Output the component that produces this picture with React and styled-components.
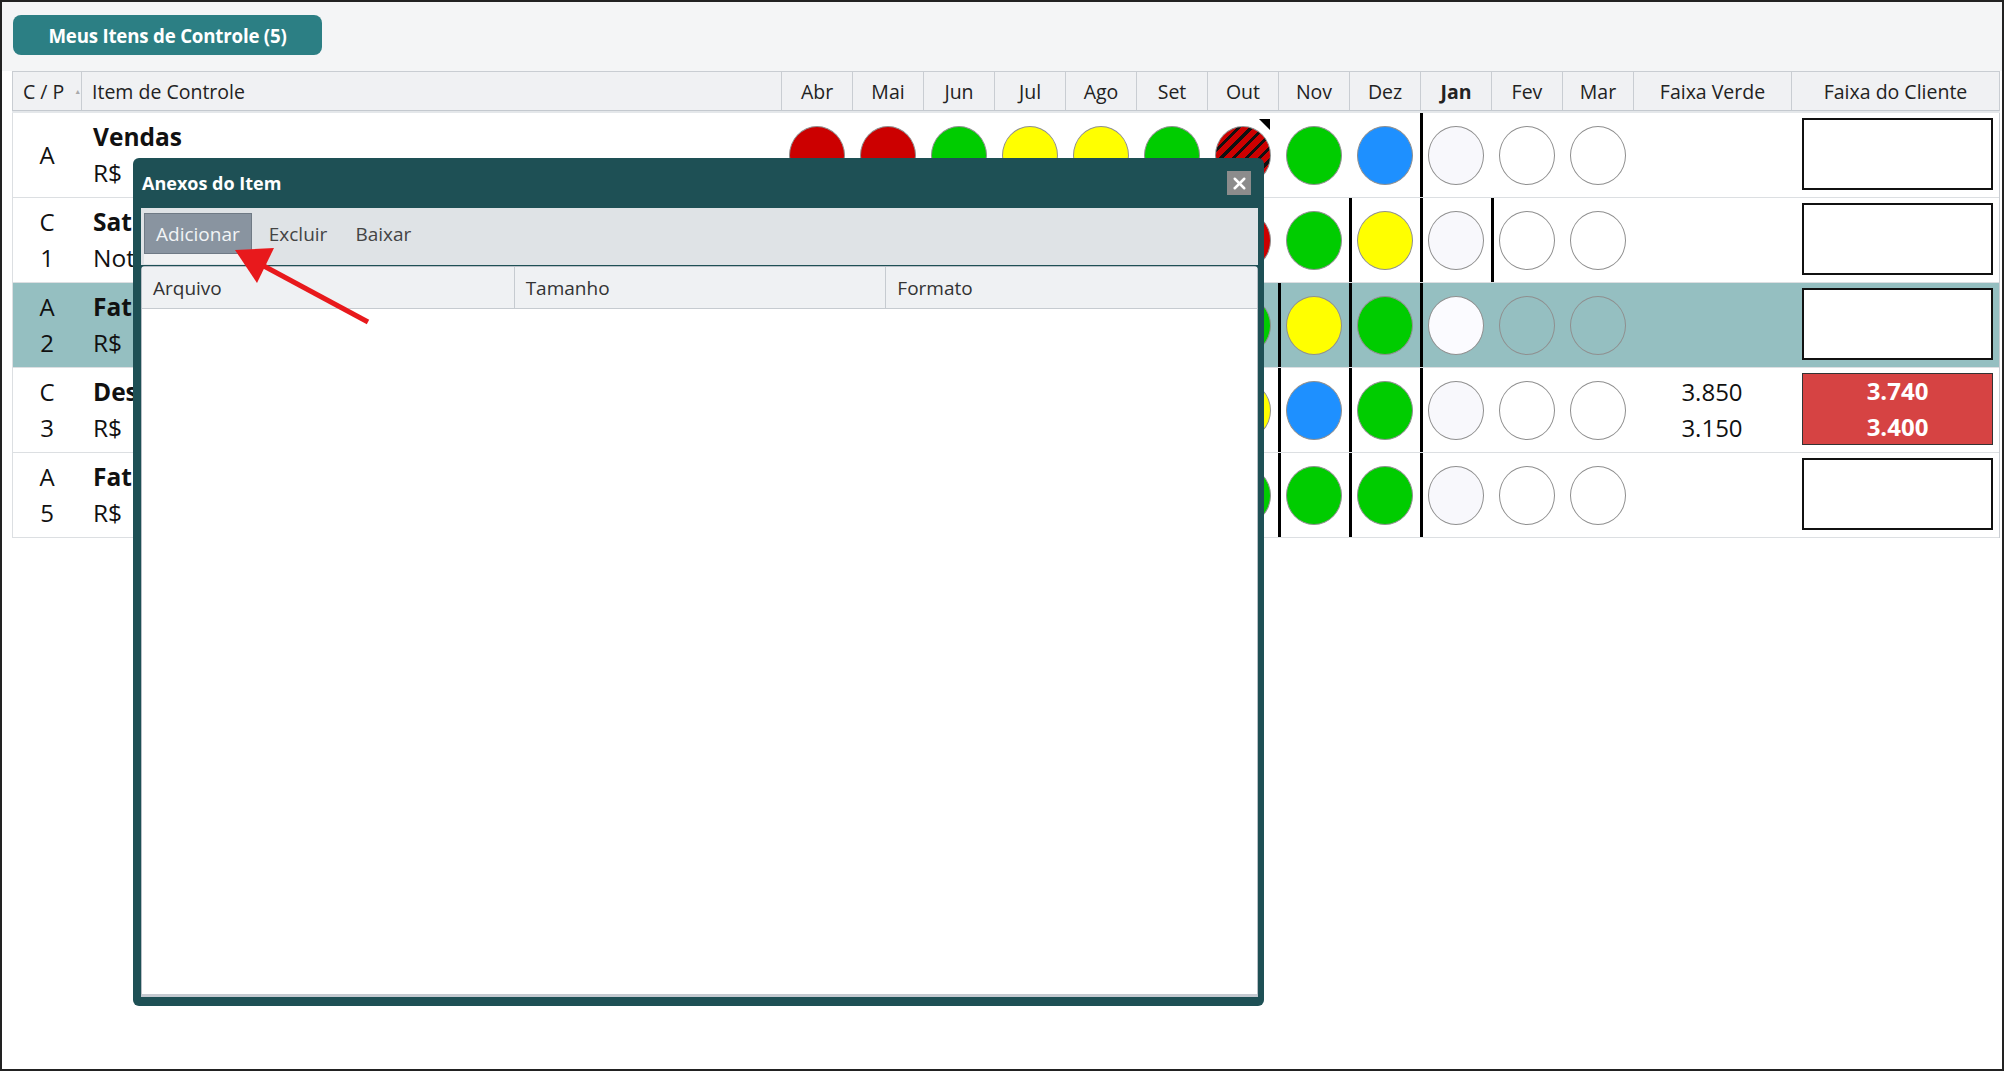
import React from "react";
import styled, { createGlobalStyle, css } from "styled-components";
import { X } from "lucide-react";

const GlobalStyle = createGlobalStyle`
  body {
    margin: 0;
    font-family: "Open Sans", "Liberation Sans", sans-serif;
    color: #111;
  }
`;

const COLUMNS = "68px 700px repeat(12, 71px) 158px 1fr";

const Page = styled.div`
  position: relative;
  width: 2004px;
  height: 1071px;
  box-sizing: border-box;
  border: 2px solid #222;
  background: #fff;
  overflow: hidden;
`;

const TopBar = styled.div`
  height: 69px;
  box-sizing: border-box;
  padding: 13px 0 0 11px;
  background: #f4f5f6;
`;

const TabButton = styled.div`
  display: flex;
  align-items: center;
  justify-content: center;
  width: 309px;
  height: 40px;
  border-radius: 8px;
  background: #2c7f84;
  color: #fff;
  font-size: 18.7px;
  font-weight: 700;
  letter-spacing: -0.2px;
`;

const Table = styled.div`
  padding: 0 2px 0 10px;
`;

const HeaderRow = styled.div`
  display: grid;
  grid-template-columns: ${COLUMNS};
  grid-template-rows: 38px;
  background: #f0f1f3;
  border-top: 1px solid #c9cdd2;
  border-left: 1px solid #c9cdd2;
  border-right: 1px solid #c9cdd2;
  border-bottom: 1px solid #c4c9cf;
  box-shadow: 0 2px 0 #e4e7ea;
`;

const HeaderCell = styled.div`
  display: flex;
  align-items: center;
  justify-content: ${(p) => (p.$left ? "flex-start" : "center")};
  padding-left: ${(p) => (p.$left ? "10px" : "0")};
  gap: 10px;
  white-space: nowrap;
  border-left: ${(p) => (p.$first ? "none" : "1px solid #c9cdd2")};
  font-size: 19.5px;
  font-weight: ${(p) => (p.$bold ? 700 : 400)};
  color: #222;
`;

const SortMark = styled.span`
  font-size: 7px;
  color: #aaa;
`;

const Body = styled.div`
  border-left: 1px solid #dcdfe2;
  border-right: 1px solid #c9cdd2;
  margin-top: 2px;
`;

const Row = styled.div`
  display: grid;
  grid-template-columns: ${COLUMNS};
  grid-template-rows: 84px;
  border-bottom: 1px solid #dcdfe2;
  background: ${(p) => (p.$highlight ? "#95bfc1" : "#fff")};
`;

const CPCell = styled.div`
  display: flex;
  flex-direction: column;
  align-items: center;
  justify-content: center;
  font-size: 24px;
  line-height: 36px;
`;

const ItemCell = styled.div`
  display: flex;
  flex-direction: column;
  justify-content: center;
  padding-left: 12px;
  font-size: 24.5px;
  line-height: 36px;
  white-space: nowrap;
  overflow: hidden;
`;

const ItemName = styled.span`
  font-weight: 700;
`;

const MonthCell = styled.div`
  position: relative;
  display: flex;
  align-items: center;
  justify-content: center;
  ${(p) =>
    p.$bar &&
    css`
      box-shadow: inset 3px 0 0 #000;
    `}
  ${(p) =>
    p.$flag &&
    css`
      &::after {
        content: "";
        position: absolute;
        top: 6px;
        right: 8px;
        border-top: 11px solid #000;
        border-left: 11px solid transparent;
      }
    `}
`;

const dotFill = {
  r: "#cc0000",
  g: "#00cc00",
  y: "#ffff00",
  b: "#1e90ff",
  c: "#f8f8fc",
  w: "#fbfbff",
  e: "transparent",
  s: "repeating-linear-gradient(135deg, #cc0000 0 6px, #111 6px 9px)",
};

const Dot = styled.div`
  width: 56px;
  height: 59px;
  box-sizing: border-box;
  border-radius: 50%;
  border: 1px solid #8f8f8f;
  background: ${(p) => dotFill[p.$kind]};
`;

const ValueCell = styled.div`
  display: flex;
  flex-direction: column;
  align-items: center;
  justify-content: center;
  font-size: 24px;
  line-height: 36px;
`;

const ClientCell = styled.div`
  display: flex;
  padding: 5px 6px 7px 11px;
`;

const ClientBox = styled.div`
  flex: 1;
  display: flex;
  flex-direction: column;
  align-items: center;
  justify-content: center;
  box-sizing: border-box;
  border: ${(p) => (p.$alert ? "1px solid #333" : "2px solid #111")};
  background: ${(p) => (p.$alert ? "#d64343" : "#fff")};
  color: #fff;
  font-size: 24px;
  line-height: 36px;
  font-weight: 700;
`;

const Dialog = styled.div`
  position: absolute;
  left: 131px;
  top: 156px;
  width: 1131px;
  height: 848px;
  box-sizing: border-box;
  padding: 0 6px 9px 8px;
  display: flex;
  flex-direction: column;
  background: #1e5055;
  border-radius: 6px;
`;

const DialogTitle = styled.div`
  display: flex;
  align-items: center;
  justify-content: space-between;
  height: 50px;
  padding: 0 1px 0 1px;
  color: #fff;
  font-size: 18px;
  font-weight: 700;
`;

const CloseButton = styled.div`
  display: flex;
  align-items: center;
  justify-content: center;
  width: 24px;
  height: 24px;
  margin-right: 6px;
  background: #8c8c8c;
  color: #fff;
`;

const Toolbar = styled.div`
  display: flex;
  align-items: flex-start;
  gap: 6px;
  height: 57px;
  box-sizing: border-box;
  padding: 5px 3px;
  background: #dfe3e6;
`;

const ToolButton = styled.div`
  display: flex;
  align-items: center;
  height: 41px;
  box-sizing: border-box;
  padding: 0 11px;
  font-size: 19px;
  color: #444;
  ${(p) =>
    p.$active &&
    css`
      background: #8994a0;
      border: 1px solid #6f7a85;
      color: #f2f4f6;
      box-shadow: 0 10px 0 #f1f2f3;
    `}
`;

const FileGrid = styled.div`
  flex: 1;
  display: flex;
  flex-direction: column;
  margin-top: 1px;
  background: #fff;
  border: 1px solid #b9bfc6;
  border-bottom: 3px solid #c5cad1;
  border-radius: 4px 4px 0 0;
`;

const FileHeader = styled.div`
  display: grid;
  grid-template-columns: repeat(3, 1fr);
  height: 41px;
  background: #eff1f3;
  border-bottom: 1px solid #c6cbd0;
`;

const FileHeaderCell = styled.div`
  display: flex;
  align-items: center;
  padding-left: 11px;
  border-left: ${(p) => (p.$first ? "none" : "1px solid #c6cbd0")};
  font-size: 19px;
  color: #333;
`;

const ArrowLayer = styled.svg`
  position: absolute;
  left: 0;
  top: 0;
  pointer-events: none;
`;

const months = ["Abr", "Mai", "Jun", "Jul", "Ago", "Set", "Out", "Nov", "Dez", "Jan", "Fev", "Mar"];

const rows = [
  {
    cp: ["A"],
    name: "Vendas",
    unit: "R$",
    dots: "r r g y y g s g b c e e",
    bars: [9],
    flag: 6,
  },
  {
    cp: ["C", "1"],
    name: "Satisfação dos Clientes",
    unit: "Nota",
    dots: "g y g g y g r g y c e e",
    bars: [8, 9, 10],
  },
  {
    cp: ["A", "2"],
    name: "Faturamento",
    unit: "R$",
    dots: "g g y g g g g y g w e e",
    bars: [7, 8, 9],
    highlight: true,
  },
  {
    cp: ["C", "3"],
    name: "Despesas",
    unit: "R$",
    dots: "g y g y g g y b g c e e",
    bars: [7, 8, 9],
    verde: ["3.850", "3.150"],
    cliente: ["3.740", "3.400"],
  },
  {
    cp: ["A", "5"],
    name: "Faturamento por Colaborador",
    unit: "R$",
    dots: "g g g y g g g g g c e e",
    bars: [7, 8, 9],
  },
];

export default function App() {
  return (
    <>
      <GlobalStyle />
      <Page>
        <TopBar>
          <TabButton>Meus Itens de Controle (5)</TabButton>
        </TopBar>
        <Table>
          <HeaderRow>
            <HeaderCell $first $left>
              C / P <SortMark>▲</SortMark>
            </HeaderCell>
            <HeaderCell $left>Item de Controle</HeaderCell>
            {months.map((m) => (
              <HeaderCell key={m} $bold={m === "Jan"}>
                {m}
              </HeaderCell>
            ))}
            <HeaderCell>Faixa Verde</HeaderCell>
            <HeaderCell>Faixa do Cliente</HeaderCell>
          </HeaderRow>
          <Body>
            {rows.map((row) => (
              <Row key={row.name} $highlight={row.highlight}>
                <CPCell>
                  {row.cp.map((c) => (
                    <span key={c}>{c}</span>
                  ))}
                </CPCell>
                <ItemCell>
                  <ItemName>{row.name}</ItemName>
                  <span>{row.unit}</span>
                </ItemCell>
                {row.dots.split(" ").map((kind, i) => (
                  <MonthCell key={i} $bar={row.bars.includes(i)} $flag={row.flag === i}>
                    <Dot $kind={kind} />
                  </MonthCell>
                ))}
                <ValueCell>
                  {(row.verde || []).map((v) => (
                    <span key={v}>{v}</span>
                  ))}
                </ValueCell>
                <ClientCell>
                  <ClientBox $alert={!!row.cliente}>
                    {(row.cliente || []).map((v) => (
                      <span key={v}>{v}</span>
                    ))}
                  </ClientBox>
                </ClientCell>
              </Row>
            ))}
          </Body>
        </Table>

        <Dialog>
          <DialogTitle>
            Anexos do Item
            <CloseButton>
              <X size={19} strokeWidth={3.2} />
            </CloseButton>
          </DialogTitle>
          <Toolbar>
            <ToolButton $active>Adicionar</ToolButton>
            <ToolButton>Excluir</ToolButton>
            <ToolButton>Baixar</ToolButton>
          </Toolbar>
          <FileGrid>
            <FileHeader>
              <FileHeaderCell $first>Arquivo</FileHeaderCell>
              <FileHeaderCell>Tamanho</FileHeaderCell>
              <FileHeaderCell>Formato</FileHeaderCell>
            </FileHeader>
          </FileGrid>
        </Dialog>

        <ArrowLayer width="2000" height="1067" viewBox="0 0 2000 1067">
          <line x1="366" y1="320" x2="260" y2="263" stroke="#e8191c" strokeWidth="5" />
          <polygon points="233,248 272,246 255,281" fill="#e8191c" />
        </ArrowLayer>
      </Page>
    </>
  );
}
